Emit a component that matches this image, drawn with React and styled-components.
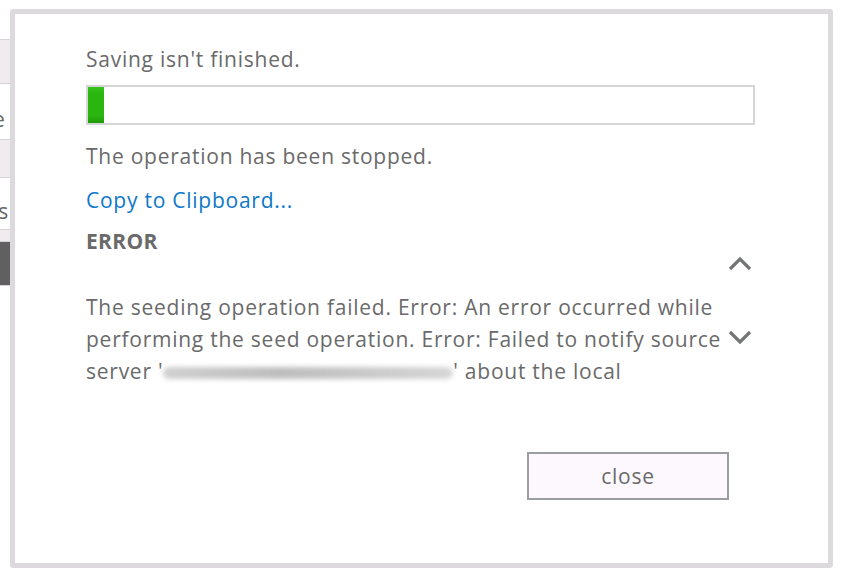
import React from "react";
import styled, { createGlobalStyle } from "styled-components";

const GlobalStyle = createGlobalStyle`
  html, body {
    margin: 0;
    padding: 0;
    background: #ffffff;
  }
  body {
    font-family: "Open Sans", "Noto Sans", sans-serif;
  }
`;

const BACK_ROWS = [
  { h: 40, bg: "#ffffff" },
  { h: 44, bg: "#efebef" },
  { h: 56, bg: "#ffffff", ch: "e" },
  { h: 38, bg: "#efebef" },
  { h: 52, bg: "#ffffff", ch: "is" },
  { h: 12, bg: "#efebef" },
  { h: 44, bg: "#5f605f" },
];

function Chevron({ up }) {
  return (
    <svg width="24" height="16" viewBox="0 0 24 16">
      <polyline
        points={up ? "2,14 12,4 22,14" : "2,3 12,13 22,3"}
        fill="none"
        stroke="#737675"
        strokeWidth="3.2"
      />
    </svg>
  );
}

function App() {
  return (
    <Page>
      <GlobalStyle />
      <BackStrip>
        {BACK_ROWS.map((r, i) => (
          <BackRow key={i} $h={r.h} $bg={r.bg}>
            {r.ch}
          </BackRow>
        ))}
      </BackStrip>
      <Dialog>
        <Status>Saving isn't finished.</Status>
        <Progress>
          <ProgressFill style={{ width: "16px" }} />
        </Progress>
        <Status>The operation has been stopped.</Status>
        <CopyLink href="#">Copy to Clipboard...</CopyLink>
        <ErrorTitle>ERROR</ErrorTitle>
        <ErrorBox>
          <ErrorText>
            The seeding operation failed. Error: An error occurred while
            performing the seed operation. Error: Failed to notify source
            server '<Redacted />' about the local
          </ErrorText>
          <Scroller>
            <Chevron up />
            <Chevron />
          </Scroller>
        </ErrorBox>
        <Footer>
          <CloseButton>close</CloseButton>
        </Footer>
      </Dialog>
    </Page>
  );
}

export default App;

const Page = styled.div`
  position: relative;
  width: 844px;
  height: 580px;
  overflow: hidden;
  background: #ffffff;
`;

const BackStrip = styled.div`
  position: absolute;
  left: 0;
  top: 0;
  width: 14px;
  display: flex;
  flex-direction: column;
`;

const BackRow = styled.div`
  height: ${(p) => p.$h}px;
  background: ${(p) => p.$bg};
  border-bottom: 1px solid #d6d4d6;
  box-sizing: border-box;
  font-size: 21px;
  color: #666;
  line-height: ${(p) => p.$h + 14}px;
  text-indent: -7px;
  overflow: hidden;
`;

const Dialog = styled.div`
  position: absolute;
  left: 10px;
  top: 9px;
  width: 823px;
  height: 559px;
  box-sizing: border-box;
  border: 5px solid #dcdadd;
  border-radius: 3px;
  background: #ffffff;
  padding: 31px 0 0 71px;
  display: flex;
  flex-direction: column;
  color: #666666;
`;

const Status = styled.div`
  font-size: 21px;
  line-height: 28px;
  letter-spacing: 0.75px;
  color: #6a6a6a;
  &:first-child {
    margin-bottom: 12px;
  }
`;

const Progress = styled.div`
  width: 669px;
  height: 40px;
  box-sizing: border-box;
  border: 2px solid #d6d6d6;
  background: #ffffff;
  margin-bottom: 17px;
`;

const ProgressFill = styled.div`
  height: 100%;
  background: linear-gradient(180deg, #35c41c 0%, #2bb60f 20%, #2bb60f 80%, #1f9a08 100%);
`;

const CopyLink = styled.a`
  margin-top: 16px;
  font-size: 21px;
  line-height: 28px;
  letter-spacing: 0.75px;
  color: #0e78c8;
  text-decoration: none;
  align-self: flex-start;
`;

const ErrorTitle = styled.div`
  margin-top: 13px;
  font-size: 21px;
  line-height: 28px;
  font-weight: 700;
  letter-spacing: 0.3px;
  color: #6a6a6a;
`;

const ErrorBox = styled.div`
  display: flex;
  gap: 2px;
`;

const ErrorText = styled.p`
  margin: 36px 0 0;
  width: 640px;
  flex-shrink: 0;
  font-size: 21px;
  line-height: 32px;
  letter-spacing: 0.75px;
  color: #6a6a6a;
`;

const Scroller = styled.div`
  display: flex;
  flex-direction: column;
  gap: 58px;
`;

const Redacted = styled.span`
  display: inline-block;
  width: 290px;
  height: 12px;
  vertical-align: middle;
  background: linear-gradient(90deg, #d0d0d0, #bdbdbd 40%, #c9c9c9 70%, #d6d6d6);
  filter: blur(2.5px);
  border-radius: 6px;
`;

const Footer = styled.div`
  display: flex;
  justify-content: flex-end;
  width: 643px;
  margin-top: 65px;
`;

const CloseButton = styled.button`
  width: 202px;
  height: 48px;
  box-sizing: border-box;
  border: 2px solid #9b9fa1;
  background: #fdf8fd;
  font-family: "Open Sans", "Noto Sans", sans-serif;
  font-size: 21px;
  letter-spacing: 0.75px;
  color: #6a6a6a;
  cursor: pointer;
`;
